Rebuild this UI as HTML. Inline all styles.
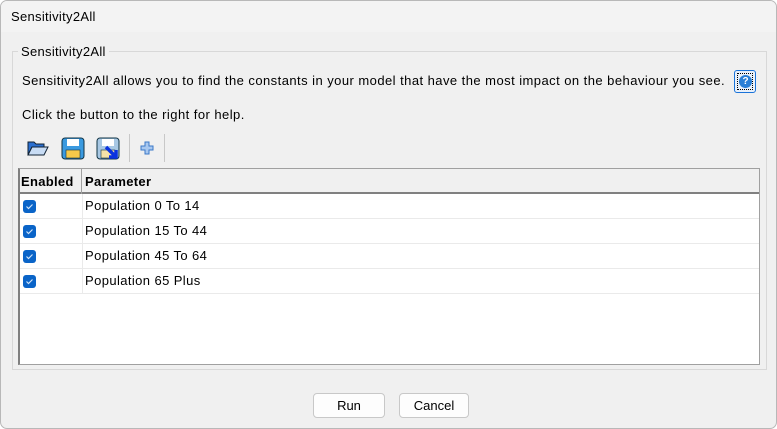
<!DOCTYPE html>
<html><head><style>
*{box-sizing:border-box;margin:0;padding:0}
body{width:777px;height:429px;background:#fff;font-family:"Liberation Sans",sans-serif;font-size:13px;color:#000;position:relative;overflow:hidden}
.win{position:absolute;left:0;top:0;width:777px;height:429px;background:#f0f0f0;border:1px solid #b8b8b8;border-radius:7px;overflow:hidden}
.title{position:absolute;left:0;top:0;width:100%;height:31px;background:#f3f3f3;}
.title span{position:absolute;left:10px;top:8px;font-size:13px;letter-spacing:.3px}
.grp{position:absolute;left:11px;top:50px;width:755px;height:319px;border:1px solid #d8d8d8}
.glab{position:absolute;left:17px;top:43px;background:#f0f0f0;padding:0 3px;font-size:13px;letter-spacing:.3px}
.t{position:absolute;font-size:13px;white-space:nowrap;letter-spacing:.45px}
.help{position:absolute;left:733px;top:69px;width:22px;height:23px;border:1px solid #1a73d9;border-radius:3px;background:#e8f0fa}
.help div{position:absolute;left:2px;top:2px;width:16px;height:17px;border:1px dotted #000}
.help div b{position:absolute;left:1px;top:1px;width:13px;height:13px;border-radius:50%;background:#2a7fd6;color:#fff;font-size:10px;text-align:center;line-height:13px}
.tbl{position:absolute;left:17px;top:167px;width:742px;height:197px;background:#fff;border:1px solid #a0a0a0;border-left:2px solid #808080}
.hdr{position:absolute;left:0;top:0;width:100%;height:25px;background:#f0f0f0;border-bottom:2px solid #808080;font-weight:bold}
.hdr span{position:absolute;top:5px;letter-spacing:.3px}
.row{position:absolute;left:0;width:100%;height:25px;border-bottom:1px solid #eaeaea}
.cb{position:absolute;left:3px;top:6px;width:13px;height:13px;border-radius:3px;background:#0a64c8}
.cb svg{position:absolute;left:0;top:0}
.row span{position:absolute;left:65px;top:4px;letter-spacing:.4px}
.vl{position:absolute;left:62px;top:0;width:1px;height:125px;background:#eaeaea}
.btn{position:absolute;top:392px;height:25px;background:#fdfdfd;border:1px solid #c8c8c8;border-radius:4px;text-align:center;line-height:23px;font-size:13px}
.sep{position:absolute;top:133px;width:1px;height:28px;background:#c8c8c8}
</style></head><body>
<div class="win">
<div class="title"><span>Sensitivity2All</span></div>
<div class="grp"></div>
<div class="glab">Sensitivity2All</div>
<div class="t" style="left:21px;top:72px">Sensitivity2All allows you to find the constants in your model that have the most impact on the behaviour you see.</div>
<div class="help"><div><b>?</b></div></div>
<div class="t" style="left:21px;top:106px">Click the button to the right for help.</div>
<svg style="position:absolute;left:26px;top:138px" width="22" height="18" viewBox="0 0 22 18"><path d="M1 3h6l2 2h8v3H5L1 16z" fill="#2a6fd0" stroke="#123" stroke-width="1"/><path d="M5 8h16l-4 8H1z" fill="#c8dcf4" stroke="#123" stroke-width="1"/></svg>
<svg style="position:absolute;left:60px;top:136px" width="24" height="23" viewBox="0 0 24 23"><rect x="1" y="1" width="22" height="21" rx="3" fill="#3a9ae0" stroke="#134" /><rect x="6" y="2" width="12" height="7" fill="#fff"/><rect x="5" y="13" width="14" height="8" fill="#f5c94a" stroke="#134" stroke-width=".6"/></svg>
<svg style="position:absolute;left:95px;top:136px" width="25" height="24" viewBox="0 0 25 24"><rect x="1" y="1" width="22" height="21" rx="3" fill="#a8c8e4" stroke="#134"/><rect x="6" y="2" width="12" height="7" fill="#fff"/><rect x="5" y="13" width="14" height="8" fill="#f5e2a8" stroke="#134" stroke-width=".6"/><path d="M10 10l9 9M13 20h7v-7" stroke="#0a32e0" stroke-width="3.5" fill="none"/></svg>
<div class="sep" style="left:128px"></div>
<svg style="position:absolute;left:139px;top:140px" width="14" height="14" viewBox="0 0 14 14"><path d="M5 1h4v4h4v4H9v4H5V9H1V5h4z" fill="#a8c8f0" stroke="#3a78c8"/></svg>
<div class="sep" style="left:163px"></div>
<div class="tbl">
<div class="hdr"><span style="left:1px">Enabled</span><span style="left:65px">Parameter</span><div style="position:absolute;left:61px;top:0;width:1px;height:25px;background:#a0a0a0"></div></div>
<div class="vl" style="top:25px;height:100px"></div>
<div class="row" style="top:25px"><div class="cb"><svg width="13" height="13"><path d="M3.5 6.5l2 2 4-4" stroke="#cfe2f8" stroke-width="1.2" fill="none"/></svg></div><span>Population 0 To 14</span></div>
<div class="row" style="top:50px"><div class="cb"><svg width="13" height="13"><path d="M3.5 6.5l2 2 4-4" stroke="#cfe2f8" stroke-width="1.2" fill="none"/></svg></div><span>Population 15 To 44</span></div>
<div class="row" style="top:75px"><div class="cb"><svg width="13" height="13"><path d="M3.5 6.5l2 2 4-4" stroke="#cfe2f8" stroke-width="1.2" fill="none"/></svg></div><span>Population 45 To 64</span></div>
<div class="row" style="top:100px"><div class="cb"><svg width="13" height="13"><path d="M3.5 6.5l2 2 4-4" stroke="#cfe2f8" stroke-width="1.2" fill="none"/></svg></div><span>Population 65 Plus</span></div>
</div>
<div class="btn" style="left:312px;width:72px">Run</div>
<div class="btn" style="left:398px;width:70px">Cancel</div>
</div>
</body></html>
